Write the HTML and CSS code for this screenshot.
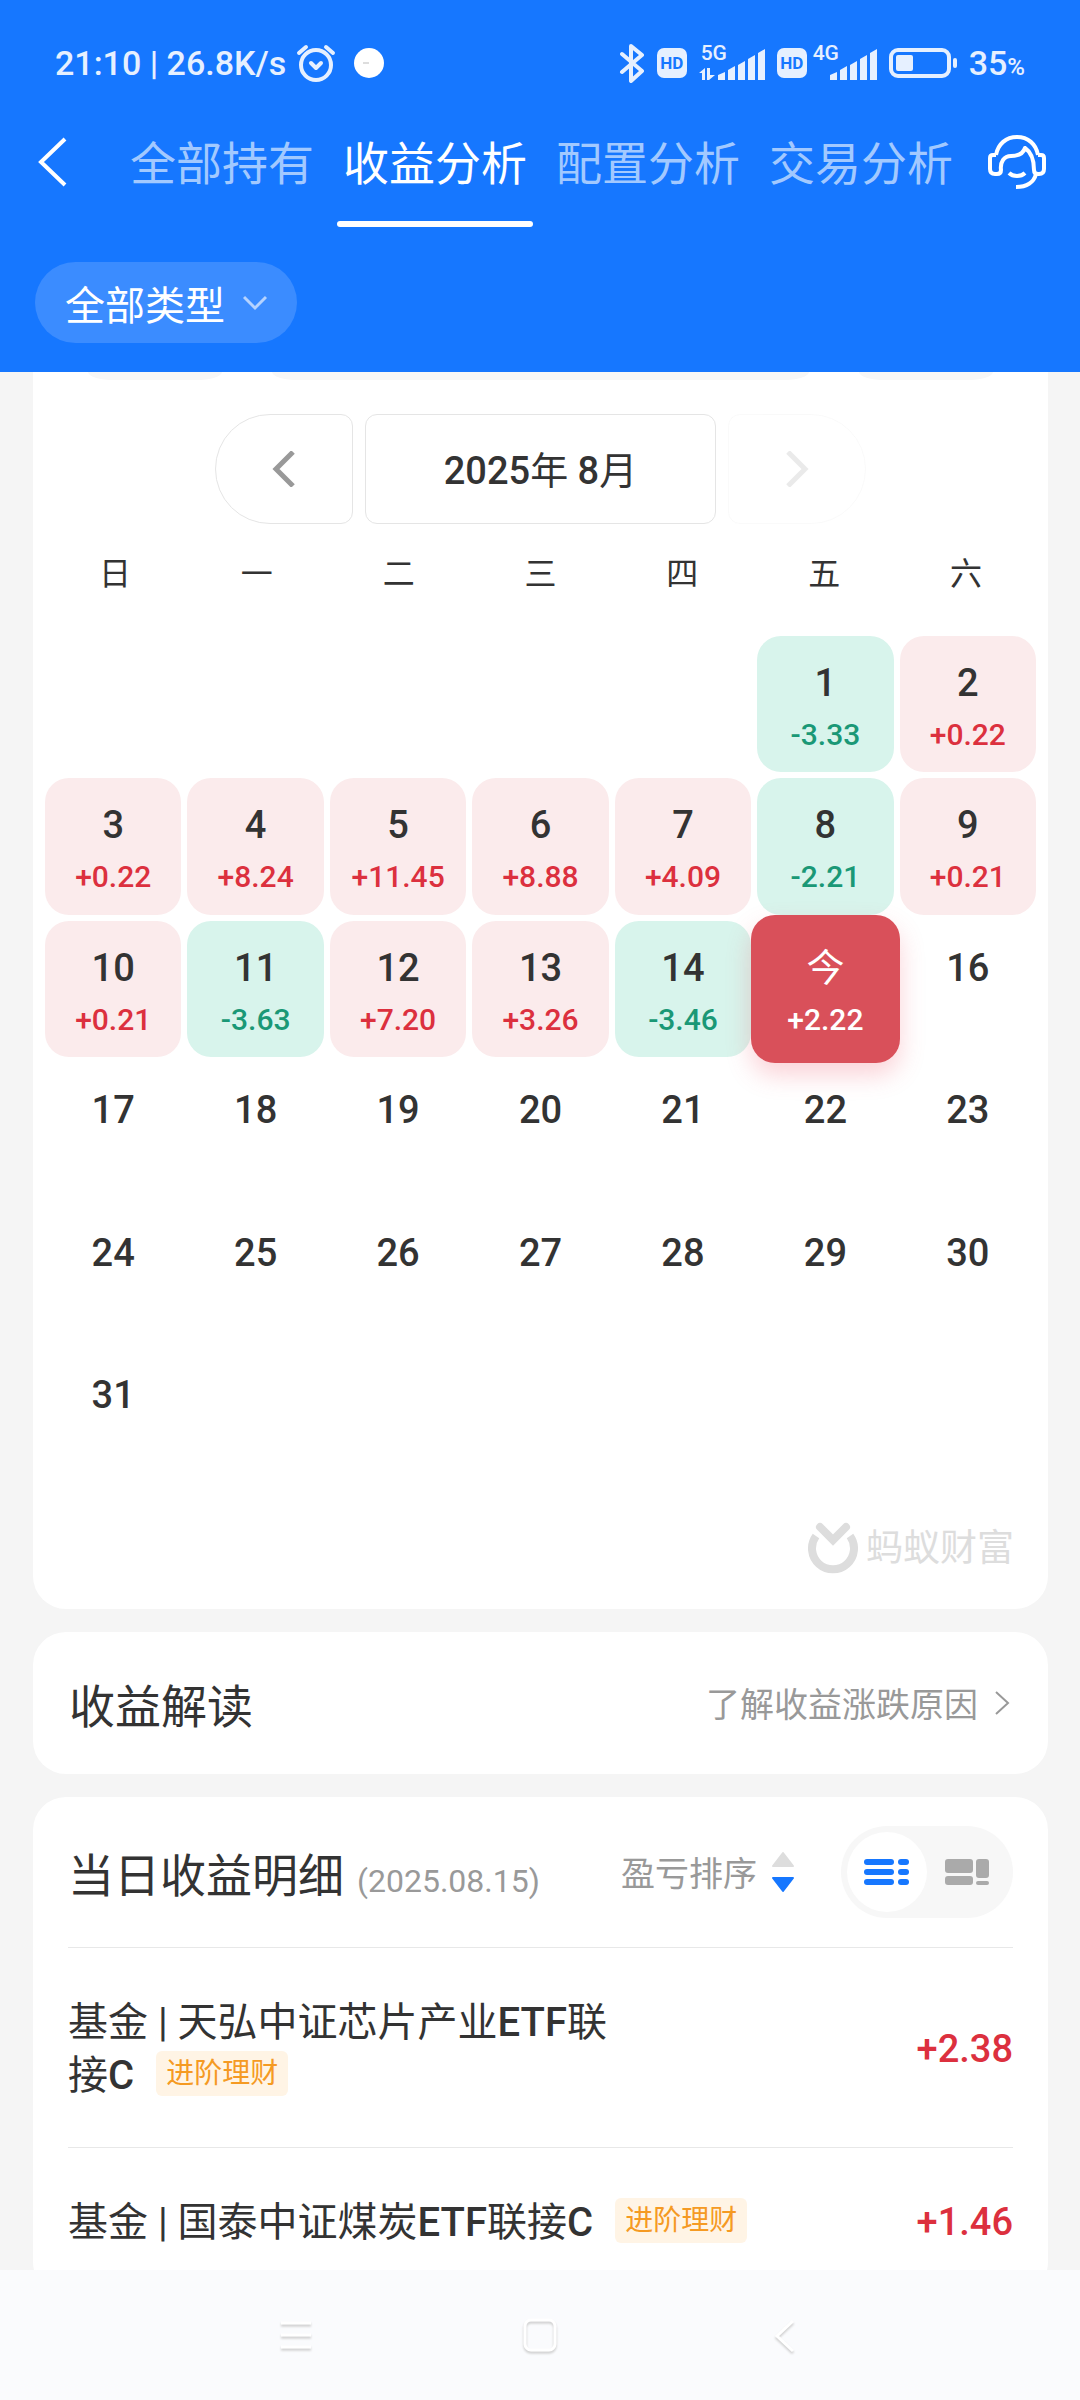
FILE: index.html
```html
<!DOCTYPE html>
<html lang="zh-CN">
<head>
  <meta charset="UTF-8">
  <meta name="viewport" content="width=device-width, initial-scale=1.0">
  <title>收益分析</title>
  <link rel="stylesheet" href="styles.css">
</head>
<body>
  <div class="app">
    <header class="header">
      <div class="status">
        <div class="status-left">
          <span>21:10 | 26.8K/s</span>
          <svg class="alarm" width="40" height="40" viewBox="0 0 40 40" fill="none" stroke="#e6f0ff" stroke-width="4" stroke-linecap="round">
            <circle cx="20" cy="22" r="15"/>
            <path d="M3 10l7-6M37 10l-7-6"/>
            <path d="M15 20l5 5 5-5" stroke-linejoin="round"/>
          </svg>
          <span class="dot"></span>
        </div>
        <div class="status-right">
          <svg width="26" height="40" viewBox="0 0 26 40" fill="none" stroke="#e6f0ff" stroke-width="4" stroke-linejoin="round" stroke-linecap="round">
            <path d="M3 11l20 17-11 10V3l11 9L3 29"/>
          </svg>
          <span class="hd">HD</span>
          <span class="signal">
            <svg width="66" height="36" viewBox="0 0 66 36" fill="#e6f0ff">
              <path d="M0 28l6-5v12H3v-7zM8 23h3v7h5l-6 5H8z"/>
              <path d="M19 30l7-3v8h-7zM29 25l7-4v14h-7zM39 20l7-4v19h-7zM49 14l7-4v25h-7zM59 8l7-4v31h-7z"/>
            </svg>
            <b class="net">5G</b>
          </span>
          <span class="hd">HD</span>
          <span class="signal second">
            <svg width="66" height="36" viewBox="0 0 66 36" fill="#e6f0ff">
              <path d="M19 30l7-3v8h-7zM29 25l7-4v14h-7zM39 20l7-4v19h-7zM49 14l7-4v25h-7zM59 8l7-4v31h-7z"/>
            </svg>
            <b class="net">4G</b>
          </span>
          <svg width="68" height="30" viewBox="0 0 68 30">
            <rect x="2" y="2" width="58" height="26" rx="7" fill="none" stroke="#e6f0ff" stroke-width="4"/>
            <rect x="7" y="7" width="17" height="16" rx="2" fill="#e6f0ff"/>
            <rect x="64" y="10" width="4" height="10" rx="2" fill="#e6f0ff"/>
          </svg>
          <span>35<small>%</small></span>
        </div>
      </div>

      <nav class="tabs">
        <button class="icon-btn back" aria-label="返回">
          <svg width="30" height="50" viewBox="0 0 30 50" fill="none" stroke="#fff" stroke-width="4">
            <path d="M28 2L4 25l24 23"/>
          </svg>
        </button>
        <div class="tab-list">
          <a class="tab" href="#">全部持有</a>
          <a class="tab active" href="#">收益分析</a>
          <a class="tab" href="#">配置分析</a>
          <a class="tab" href="#">交易分析</a>
        </div>
        <button class="icon-btn service" aria-label="客服">
          <svg width="58" height="56" viewBox="0 0 58 56" fill="none" stroke="#fff" stroke-width="4" stroke-linejoin="round">
            <path d="M8 21C10 10 18 3 29 3s19 7 21 18"/>
            <path d="M8 21H5q-3 0-3 3v11q0 5 5 5h2q4 0 4-4c-1-8 3-14 10-14 7 0 12-2 14-8 6 4 9 11 9 22q0 4 4 4h1q5 0 5-5V24q0-3-3-3h-3"/>
            <path d="M48 40c-2 8-9 13-20 13"/>
            <path d="M21 39c4 4 12 4 16 0"/>
          </svg>
        </button>
      </nav>

      <button class="filter">
        全部类型
        <svg width="24" height="16" viewBox="0 0 24 16" fill="none" stroke="#b5d3ff" stroke-width="3">
          <path d="M1 2l11 11L23 2"/>
        </svg>
      </button>
    </header>

    <main class="content">
      <section class="card calendar">
        <!-- lower edge of the pills scrolled under the header -->
        <div class="pills">
          <span class="pill"></span>
          <span class="pill wide"></span>
          <span class="pill"></span>
        </div>

        <div class="month-bar">
          <button class="month-btn prev" aria-label="上个月">
            <svg width="24" height="36" viewBox="0 0 24 36" fill="none" stroke="#999" stroke-width="5">
              <path d="M21 1L4 18l17 17"/>
            </svg>
          </button>
          <button class="month-btn month"><span><b>2025</b>年 <b>8</b>月</span></button>
          <button class="month-btn next" aria-label="下个月" disabled>
            <svg width="24" height="36" viewBox="0 0 24 36" fill="none" stroke="#999" stroke-width="5">
              <path d="M3 1l17 17L3 35"/>
            </svg>
          </button>
        </div>

        <div class="week">
          <span>日</span><span>一</span><span>二</span><span>三</span><span>四</span><span>五</span><span>六</span>
        </div>

        <div class="days">
          <div class="day down first">1<span>-3.33</span></div>
          <div class="day up">2<span>+0.22</span></div>

          <div class="day up">3<span>+0.22</span></div>
          <div class="day up">4<span>+8.24</span></div>
          <div class="day up">5<span>+11.45</span></div>
          <div class="day up">6<span>+8.88</span></div>
          <div class="day up">7<span>+4.09</span></div>
          <div class="day down">8<span>-2.21</span></div>
          <div class="day up">9<span>+0.21</span></div>

          <div class="day up">10<span>+0.21</span></div>
          <div class="day down">11<span>-3.63</span></div>
          <div class="day up">12<span>+7.20</span></div>
          <div class="day up">13<span>+3.26</span></div>
          <div class="day down">14<span>-3.46</span></div>
          <div class="day today">今<span>+2.22</span></div>
          <div class="day">16</div>

          <div class="day">17</div>
          <div class="day">18</div>
          <div class="day">19</div>
          <div class="day">20</div>
          <div class="day">21</div>
          <div class="day">22</div>
          <div class="day">23</div>

          <div class="day">24</div>
          <div class="day">25</div>
          <div class="day">26</div>
          <div class="day">27</div>
          <div class="day">28</div>
          <div class="day">29</div>
          <div class="day">30</div>

          <div class="day">31</div>
        </div>

        <div class="brand">
          <svg width="50" height="54" viewBox="0 0 50 54" fill="none" stroke="#ddd">
            <path d="M8 14a21 21 0 1 0 34 0" stroke-width="8" stroke-linejoin="round"/>
            <path d="M12 5l13 13L38 5" stroke-width="8" stroke-linecap="round"/>
          </svg>
          <span>蚂蚁财富</span>
        </div>
      </section>

      <section class="card explain">
        <h2>收益解读</h2>
        <a class="more" href="#">
          了解收益涨跌原因
          <svg width="16" height="26" viewBox="0 0 16 26" fill="none" stroke="#999" stroke-width="2">
            <path d="M2 2l12 11L2 24"/>
          </svg>
        </a>
      </section>

      <section class="card detail">
        <div class="detail-head">
          <div class="detail-title">
            <h2>当日收益明细</h2>
            <span class="date">(2025.08.15)</span>
          </div>
          <button class="sort">
            盈亏排序
            <svg width="24" height="42" viewBox="0 0 24 42" stroke-linejoin="round" stroke-width="2">
              <path d="M12 2l10 13H2z" fill="#ddd" stroke="#ddd"/>
              <path d="M12 40l10-13H2z" fill="#1677ff" stroke="#1677ff"/>
            </svg>
          </button>
          <div class="switch">
            <button class="switch-btn on" aria-label="列表">
              <svg width="46" height="26" viewBox="0 0 46 26" fill="#1677ff">
                <rect width="30" height="6" rx="3"/><rect x="34" width="11" height="6" rx="3"/>
                <rect y="10" width="30" height="6" rx="3"/><rect x="34" y="10" width="11" height="6" rx="3"/>
                <rect y="20" width="30" height="6" rx="3"/><rect x="34" y="20" width="11" height="6" rx="3"/>
              </svg>
            </button>
            <button class="switch-btn" aria-label="色块">
              <svg width="44" height="26" viewBox="0 0 44 26" fill="#aaa">
                <rect width="28" height="14" rx="3"/><rect x="31" width="13" height="19" rx="3"/>
                <rect y="17" width="28" height="9" rx="3"/><rect x="31" y="22" width="13" height="4" rx="2"/>
              </svg>
            </button>
          </div>
        </div>

        <div class="fund">
          <div class="fund-name">基金 | 天弘中证芯片产业<b>ETF</b>联<span class="tail">接<b>C</b><span class="tag">进阶理财</span></span></div>
          <div class="profit">+2.38</div>
        </div>
        <div class="fund">
          <div class="fund-name">基金 | 国泰中证煤炭<b>ETF</b>联<span class="tail">接<b>C</b><span class="tag">进阶理财</span></span></div>
          <div class="profit">+1.46</div>
        </div>
      </section>
    </main>

    <footer class="sysnav">
      <button class="icon-btn" aria-label="菜单">
        <svg width="36" height="40" viewBox="0 0 36 40" fill="none" stroke="#fff" stroke-width="3">
          <path d="M3 6h30M3 18h30M3 30h30"/>
        </svg>
      </button>
      <button class="icon-btn" aria-label="主页">
        <svg width="36" height="40" viewBox="0 0 36 40" fill="none" stroke="#fff" stroke-width="3">
          <rect x="3" y="3" width="30" height="30" rx="6"/>
        </svg>
      </button>
      <button class="icon-btn" aria-label="返回">
        <svg width="36" height="40" viewBox="0 0 36 40" fill="none" stroke="#fff" stroke-width="3">
          <path d="M27 4L11 19l16 15"/>
        </svg>
      </button>
    </footer>
  </div>
</body>
</html>
```
FILE: styles.css
```css
* {
  box-sizing: border-box;
}
body {
  margin: 0;
  background: #f5f5f5;
  color: #333;
  font-family: Roboto, "Noto Sans CJK SC", sans-serif;
}
button {
  margin: 0;
  padding: 0;
  border: 0;
  background: none;
  color: inherit;
  font: inherit;
}
a {
  color: inherit;
  text-decoration: none;
}
b {
  font-weight: 500;
}
h2 {
  margin: 0;
  font-size: 46px;
  font-weight: 400;
}
svg {
  display: block;
  flex: none;
}
.app {
  display: flex;
  flex-direction: column;
  height: 100vh;
}

/* header */
.header {
  flex: none;
  padding-bottom: 29px;
  background: #1677ff;
  color: #fff;
}
.status {
  display: flex;
  justify-content: space-between;
  align-items: center;
  height: 126px;
  padding: 0 55px;
  color: #e6f0ff;
  font-size: 34px;
  font-weight: 500;
}
.status-left,
.status-right {
  display: flex;
  align-items: center;
}
.alarm {
  margin-left: 10px;
}
.dot {
  display: flex;
  align-items: center;
  width: 30px;
  height: 30px;
  margin-left: 18px;
  padding-left: 9px;
  border-radius: 50%;
  background: #fff;
}
.dot::after {
  content: "";
  width: 6px;
  height: 2px;
  background: #ddd;
}
.status-right {
  gap: 12px;
}
.status-right small {
  font-size: 24px;
}
.hd {
  width: 30px;
  height: 30px;
  border-radius: 7px;
  background: #e6f0ff;
  color: #1677ff;
  font-size: 17px;
  font-weight: 700;
  line-height: 30px;
  text-align: center;
}
.signal {
  position: relative;
}
.second {
  margin-left: -8px;
}
.net {
  position: absolute;
  top: -4px;
  left: 2px;
  font-size: 21px;
  line-height: 24px;
}
.tabs {
  display: flex;
  align-items: center;
  height: 101px;
  padding: 0 34px 0 37px;
}
.icon-btn {
  display: flex;
  justify-content: center;
}
.back,
.service {
  margin-bottom: 30px;
}
.tab-list {
  display: flex;
  flex: 1;
  justify-content: flex-end;
  gap: 17px;
  margin-right: 29px;
}
.tab {
  display: flex;
  flex-direction: column;
  justify-content: space-between;
  width: 196px;
  height: 101px;
  color: #a2c9ff;
  font-size: 46px;
  line-height: 76px;
  text-align: center;
}
.tab.active {
  color: #fff;
}
.tab.active::after {
  content: "";
  height: 6px;
  border-radius: 3px;
  background: #fff;
}
.filter {
  display: flex;
  align-items: center;
  gap: 18px;
  height: 81px;
  margin: 35px 0 0 35px;
  padding: 0 30px;
  border-radius: 41px;
  background: #3b8cff;
  font-size: 40px;
}

/* content */
.content {
  flex: 1;
  min-height: 0;
  padding: 0 32px 0 33px;
  overflow: hidden;
}
.card {
  margin-bottom: 23px;
  border-radius: 33px;
  background: #fff;
}
.calendar {
  padding: 0 12px 33px;
  border-radius: 0 0 33px 33px;
}
.pills {
  display: flex;
  justify-content: center;
  gap: 50px;
  margin-bottom: 34px;
}
.pill {
  width: 134px;
  height: 8px;
  border-radius: 0 0 26px 26px / 0 0 8px 8px;
  background: #f7f7f7;
}
.pill.wide {
  width: 537px;
}
.month-bar {
  display: flex;
  justify-content: center;
  gap: 12px;
}
.month-btn {
  display: flex;
  align-items: center;
  justify-content: center;
  width: 138px;
  height: 110px;
  border: 1px solid #e5e5e5;
  border-radius: 12px;
}
.prev {
  border-radius: 55px 12px 12px 55px;
}
.next {
  border-radius: 12px 55px 55px 12px;
  opacity: 0.2;
}
.month {
  width: 351px;
  padding-bottom: 4px;
  font-size: 38px;
}
.week,
.days {
  display: grid;
  grid-template-columns: repeat(7, 1fr);
  gap: 6px;
}
.week {
  height: 112px;
  padding: 0 2px;
  font-size: 32px;
  line-height: 100px;
  text-align: center;
}
.day {
  aspect-ratio: 1;
  padding-top: 24px;
  border-radius: 24px;
  font-size: 38px;
  font-weight: 500;
  line-height: 46px;
  text-align: center;
}
.day span {
  display: block;
  margin-top: 6px;
  font-size: 30px;
  font-weight: 500;
}
.first {
  grid-column-start: 6;
}
.up {
  background: #fbebec;
}
.up span {
  color: #dc303e;
}
.down {
  background: #d8f4ec;
}
.down span {
  color: #1a9876;
}
.today {
  margin: -6px;
  padding-top: 30px;
  background: #d9505a;
  box-shadow: 0 12px 24px rgba(240, 80, 100, 0.25);
  color: #fff;
  font-weight: 400;
}
.brand {
  display: flex;
  align-items: center;
  justify-content: flex-end;
  gap: 8px;
  margin-top: 37px;
  padding-right: 22px;
  color: #ddd;
  font-size: 37px;
  line-height: 54px;
}
.explain {
  display: flex;
  align-items: center;
  justify-content: space-between;
  height: 142px;
  padding: 0 38px 0 36px;
}
.more {
  display: flex;
  align-items: center;
  gap: 16px;
  color: #999;
  font-size: 34px;
}
.detail {
  padding: 0 35px;
}
.detail-head {
  display: flex;
  align-items: center;
  height: 151px;
  border-bottom: 1px solid #e8e8e8;
}
.detail-title {
  display: flex;
  align-items: baseline;
  gap: 13px;
}
.date {
  color: #999;
  font-size: 32px;
}
.sort {
  display: flex;
  align-items: center;
  gap: 14px;
  margin-left: auto;
  color: #999;
  font-size: 34px;
}
.switch {
  display: flex;
  margin-left: 46px;
  padding: 6px;
  border-radius: 46px;
  background: #f7f7f7;
}
.switch-btn {
  display: flex;
  align-items: center;
  justify-content: center;
  width: 80px;
  height: 80px;
  border-radius: 50%;
}
.switch-btn.on {
  background: #fff;
}
.fund {
  display: flex;
  align-items: center;
  justify-content: space-between;
  padding: 48px 0 45px;
  border-bottom: 1px solid #e8e8e8;
}
.fund-name {
  max-width: 690px;
  font-size: 40px;
  line-height: 53px;
}
.tail {
  white-space: nowrap;
}
.tag {
  display: inline-block;
  margin: 2px 0 0 22px;
  padding: 0 10px;
  border-radius: 6px;
  background: #fff4e5;
  color: #f59a23;
  font-size: 28px;
  line-height: 45px;
  vertical-align: top;
}
.profit {
  color: #dc303e;
  font-size: 38px;
  font-weight: 500;
}

/* system navigation */
.sysnav {
  display: flex;
  flex: none;
  align-items: center;
  justify-content: center;
  gap: 208px;
  height: 130px;
  padding-top: 4px;
  background: #fafbfd;
}
.sysnav svg {
  filter: drop-shadow(0 2px 1px #ccc);
}
```
